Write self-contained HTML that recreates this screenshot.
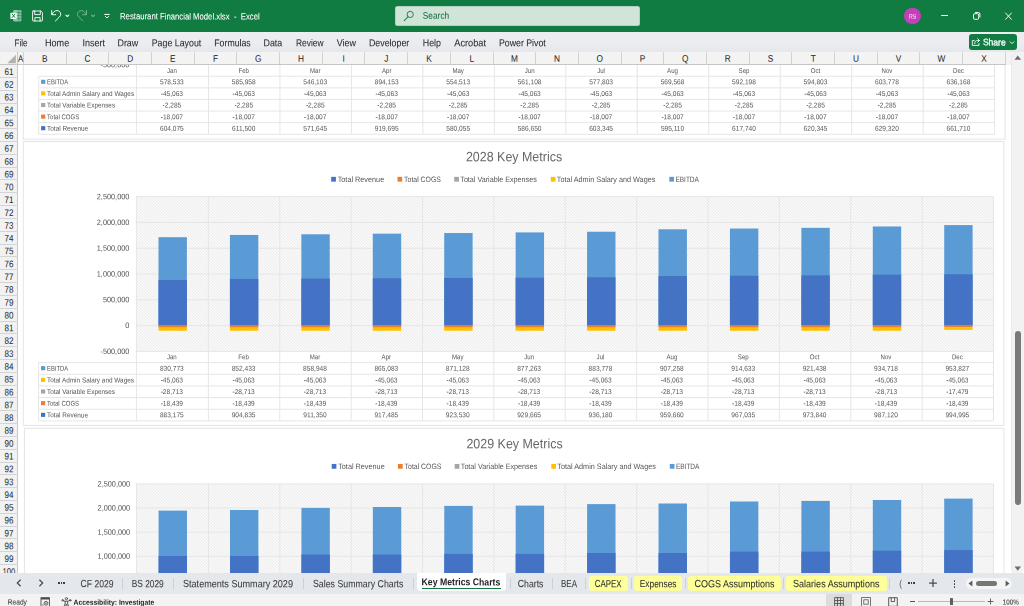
<!DOCTYPE html>
<html lang="en"><head><meta charset="utf-8"><title>Restaurant Financial Model.xlsx - Excel</title>
<style>
html,body{margin:0;padding:0;}
body{width:1024px;height:606px;overflow:hidden;background:#fff;position:relative;font-family:"Liberation Sans",sans-serif;}
#app{position:absolute;left:0;top:0;width:1024px;height:606px;overflow:hidden;background:#fff;}
.t{position:absolute;left:0;top:0;white-space:pre;transform-origin:0 0;display:block;line-height:normal;}
.b{position:absolute;}
.sb{-webkit-text-stroke-width:.3px;opacity:.999;}
.u{-webkit-text-stroke-width:.06px;opacity:.999;}
.h{-webkit-text-stroke-width:.05px;}
.c{filter:grayscale(1);}
svg{position:absolute;overflow:visible;}
</style></head><body><div id="app">
<svg width="1024" height="606" viewBox="0 0 1024 606" style="left:0;top:0"><defs><pattern id="hatch" width="3" height="3" patternUnits="userSpaceOnUse" shape-rendering="crispEdges"><rect width="3" height="3" fill="#F8F8F8"/><rect x="0" y="0" width="1" height="1" fill="#EDEDED"/><rect x="1" y="1" width="1" height="1" fill="#EDEDED"/><rect x="2" y="2" width="1" height="1" fill="#EDEDED"/></pattern></defs><rect x="23.30" y="-150.00" width="981.80" height="289.20" fill="#fff" stroke="#E4E4E4" stroke-width="1"/><rect x="137.0" y="40" width="857.6" height="25" fill="url(#hatch)"/><rect x="38.70" y="75.75" width="955.90" height="1" fill="#E6E6E6"/><rect x="38.70" y="87.35" width="955.90" height="1" fill="#E6E6E6"/><rect x="38.70" y="98.95" width="955.90" height="1" fill="#E6E6E6"/><rect x="38.70" y="110.55" width="955.90" height="1" fill="#E6E6E6"/><rect x="38.70" y="122.15" width="955.90" height="1" fill="#E6E6E6"/><rect x="38.70" y="133.75" width="955.90" height="1" fill="#E6E6E6"/><rect x="38.20" y="76.25" width="1" height="58.00" fill="#E6E6E6"/><rect x="135.90" y="64.65" width="1" height="69.60" fill="#E6E6E6"/><rect x="207.97" y="64.65" width="1" height="69.60" fill="#E6E6E6"/><rect x="279.43" y="64.65" width="1" height="69.60" fill="#E6E6E6"/><rect x="350.90" y="64.65" width="1" height="69.60" fill="#E6E6E6"/><rect x="422.37" y="64.65" width="1" height="69.60" fill="#E6E6E6"/><rect x="493.83" y="64.65" width="1" height="69.60" fill="#E6E6E6"/><rect x="565.30" y="64.65" width="1" height="69.60" fill="#E6E6E6"/><rect x="636.77" y="64.65" width="1" height="69.60" fill="#E6E6E6"/><rect x="708.23" y="64.65" width="1" height="69.60" fill="#E6E6E6"/><rect x="779.70" y="64.65" width="1" height="69.60" fill="#E6E6E6"/><rect x="851.17" y="64.65" width="1" height="69.60" fill="#E6E6E6"/><rect x="922.63" y="64.65" width="1" height="69.60" fill="#E6E6E6"/><rect x="994.10" y="64.65" width="1" height="69.60" fill="#E6E6E6"/><rect x="41.10" y="79.75" width="4.20" height="4.10" fill="#5B9BD5" /><rect x="41.10" y="91.35" width="4.20" height="4.10" fill="#FFC000" /><rect x="41.10" y="102.95" width="4.20" height="4.10" fill="#A5A5A5" /><rect x="41.10" y="114.55" width="4.20" height="4.10" fill="#ED7D31" /><rect x="41.10" y="126.15" width="4.20" height="4.10" fill="#4472C4" /><rect x="23.30" y="141.50" width="980.50" height="283.90" fill="#fff" stroke="#E4E4E4" stroke-width="1"/><rect x="331.20" y="176.85" width="4.70" height="4.80" fill="#4472C4" /><rect x="397.50" y="176.85" width="4.70" height="4.80" fill="#ED7D31" /><rect x="454.20" y="176.85" width="4.70" height="4.80" fill="#A5A5A5" /><rect x="550.80" y="176.85" width="4.70" height="4.80" fill="#FFC000" /><rect x="669.30" y="176.85" width="4.70" height="4.80" fill="#5B9BD5" /><rect x="136.10" y="196.65" width="857.40" height="154.74" fill="url(#hatch)"/><rect x="136.10" y="196.15" width="857.40" height="1" fill="#E6E6E6"/><rect x="136.10" y="221.94" width="857.40" height="1" fill="#E6E6E6"/><rect x="136.10" y="247.73" width="857.40" height="1" fill="#E6E6E6"/><rect x="136.10" y="273.52" width="857.40" height="1" fill="#E6E6E6"/><rect x="136.10" y="299.31" width="857.40" height="1" fill="#E6E6E6"/><rect x="136.10" y="325.10" width="857.40" height="1" fill="#E6E6E6"/><rect x="136.10" y="350.89" width="857.40" height="1" fill="#E6E6E6"/><rect x="135.90" y="196.65" width="1" height="154.74" fill="#E6E6E6"/><rect x="207.88" y="196.65" width="1" height="154.74" fill="#E6E6E6"/><rect x="279.25" y="196.65" width="1" height="154.74" fill="#E6E6E6"/><rect x="350.62" y="196.65" width="1" height="154.74" fill="#E6E6E6"/><rect x="422.00" y="196.65" width="1" height="154.74" fill="#E6E6E6"/><rect x="493.38" y="196.65" width="1" height="154.74" fill="#E6E6E6"/><rect x="564.75" y="196.65" width="1" height="154.74" fill="#E6E6E6"/><rect x="636.12" y="196.65" width="1" height="154.74" fill="#E6E6E6"/><rect x="707.50" y="196.65" width="1" height="154.74" fill="#E6E6E6"/><rect x="778.88" y="196.65" width="1" height="154.74" fill="#E6E6E6"/><rect x="850.25" y="196.65" width="1" height="154.74" fill="#E6E6E6"/><rect x="921.62" y="196.65" width="1" height="154.74" fill="#E6E6E6"/><rect x="993.00" y="196.65" width="1" height="154.74" fill="#E6E6E6"/><rect x="158.49" y="237.19" width="28.40" height="88.41" fill="#5B9BD5" /><rect x="158.49" y="280.05" width="28.40" height="45.55" fill="#4472C4" /><rect x="158.49" y="325.33" width="28.40" height="1.79" fill="#E5813A" /><rect x="158.49" y="327.08" width="28.40" height="0.84" fill="#B0A79A" /><rect x="158.49" y="327.88" width="28.40" height="2.84" fill="#FFC000" /><rect x="229.92" y="234.96" width="28.40" height="90.64" fill="#5B9BD5" /><rect x="229.92" y="278.93" width="28.40" height="46.67" fill="#4472C4" /><rect x="229.92" y="325.33" width="28.40" height="1.79" fill="#E5813A" /><rect x="229.92" y="327.08" width="28.40" height="0.84" fill="#B0A79A" /><rect x="229.92" y="327.88" width="28.40" height="2.84" fill="#FFC000" /><rect x="301.35" y="234.29" width="28.40" height="91.31" fill="#5B9BD5" /><rect x="301.35" y="278.59" width="28.40" height="47.01" fill="#4472C4" /><rect x="301.35" y="325.33" width="28.40" height="1.79" fill="#E5813A" /><rect x="301.35" y="327.08" width="28.40" height="0.84" fill="#B0A79A" /><rect x="301.35" y="327.88" width="28.40" height="2.84" fill="#FFC000" /><rect x="372.78" y="233.66" width="28.40" height="91.94" fill="#5B9BD5" /><rect x="372.78" y="278.28" width="28.40" height="47.32" fill="#4472C4" /><rect x="372.78" y="325.33" width="28.40" height="1.79" fill="#E5813A" /><rect x="372.78" y="327.08" width="28.40" height="0.84" fill="#B0A79A" /><rect x="372.78" y="327.88" width="28.40" height="2.84" fill="#FFC000" /><rect x="444.21" y="233.03" width="28.40" height="92.57" fill="#5B9BD5" /><rect x="444.21" y="277.96" width="28.40" height="47.64" fill="#4472C4" /><rect x="444.21" y="325.33" width="28.40" height="1.79" fill="#E5813A" /><rect x="444.21" y="327.08" width="28.40" height="0.84" fill="#B0A79A" /><rect x="444.21" y="327.88" width="28.40" height="2.84" fill="#FFC000" /><rect x="515.64" y="232.40" width="28.40" height="93.20" fill="#5B9BD5" /><rect x="515.64" y="277.65" width="28.40" height="47.95" fill="#4472C4" /><rect x="515.64" y="325.33" width="28.40" height="1.79" fill="#E5813A" /><rect x="515.64" y="327.08" width="28.40" height="0.84" fill="#B0A79A" /><rect x="515.64" y="327.88" width="28.40" height="2.84" fill="#FFC000" /><rect x="587.07" y="231.73" width="28.40" height="93.87" fill="#5B9BD5" /><rect x="587.07" y="277.31" width="28.40" height="48.29" fill="#4472C4" /><rect x="587.07" y="325.33" width="28.40" height="1.79" fill="#E5813A" /><rect x="587.07" y="327.08" width="28.40" height="0.84" fill="#B0A79A" /><rect x="587.07" y="327.88" width="28.40" height="2.84" fill="#FFC000" /><rect x="658.50" y="229.30" width="28.40" height="96.30" fill="#5B9BD5" /><rect x="658.50" y="276.10" width="28.40" height="49.50" fill="#4472C4" /><rect x="658.50" y="325.33" width="28.40" height="1.79" fill="#E5813A" /><rect x="658.50" y="327.08" width="28.40" height="0.84" fill="#B0A79A" /><rect x="658.50" y="327.88" width="28.40" height="2.84" fill="#FFC000" /><rect x="729.93" y="228.54" width="28.40" height="97.06" fill="#5B9BD5" /><rect x="729.93" y="275.72" width="28.40" height="49.88" fill="#4472C4" /><rect x="729.93" y="325.33" width="28.40" height="1.79" fill="#E5813A" /><rect x="729.93" y="327.08" width="28.40" height="0.84" fill="#B0A79A" /><rect x="729.93" y="327.88" width="28.40" height="2.84" fill="#FFC000" /><rect x="801.36" y="227.84" width="28.40" height="97.76" fill="#5B9BD5" /><rect x="801.36" y="275.37" width="28.40" height="50.23" fill="#4472C4" /><rect x="801.36" y="325.33" width="28.40" height="1.79" fill="#E5813A" /><rect x="801.36" y="327.08" width="28.40" height="0.84" fill="#B0A79A" /><rect x="801.36" y="327.88" width="28.40" height="2.84" fill="#FFC000" /><rect x="872.79" y="226.47" width="28.40" height="99.13" fill="#5B9BD5" /><rect x="872.79" y="274.68" width="28.40" height="50.92" fill="#4472C4" /><rect x="872.79" y="325.33" width="28.40" height="1.79" fill="#E5813A" /><rect x="872.79" y="327.08" width="28.40" height="0.84" fill="#B0A79A" /><rect x="872.79" y="327.88" width="28.40" height="2.84" fill="#FFC000" /><rect x="944.22" y="225.08" width="28.40" height="100.52" fill="#5B9BD5" /><rect x="944.22" y="274.28" width="28.40" height="51.32" fill="#4472C4" /><rect x="944.22" y="325.33" width="28.40" height="1.79" fill="#E5813A" /><rect x="944.22" y="327.08" width="28.40" height="2.79" fill="#FFC000" /><rect x="38.60" y="362.10" width="954.90" height="1" fill="#E6E6E6"/><rect x="38.60" y="373.76" width="954.90" height="1" fill="#E6E6E6"/><rect x="38.60" y="385.42" width="954.90" height="1" fill="#E6E6E6"/><rect x="38.60" y="397.08" width="954.90" height="1" fill="#E6E6E6"/><rect x="38.60" y="408.74" width="954.90" height="1" fill="#E6E6E6"/><rect x="38.60" y="420.40" width="954.90" height="1" fill="#E6E6E6"/><rect x="38.10" y="362.60" width="1" height="58.30" fill="#E6E6E6"/><rect x="135.90" y="350.94" width="1" height="69.96" fill="#E6E6E6"/><rect x="207.88" y="350.94" width="1" height="69.96" fill="#E6E6E6"/><rect x="279.25" y="350.94" width="1" height="69.96" fill="#E6E6E6"/><rect x="350.62" y="350.94" width="1" height="69.96" fill="#E6E6E6"/><rect x="422.00" y="350.94" width="1" height="69.96" fill="#E6E6E6"/><rect x="493.38" y="350.94" width="1" height="69.96" fill="#E6E6E6"/><rect x="564.75" y="350.94" width="1" height="69.96" fill="#E6E6E6"/><rect x="636.12" y="350.94" width="1" height="69.96" fill="#E6E6E6"/><rect x="707.50" y="350.94" width="1" height="69.96" fill="#E6E6E6"/><rect x="778.88" y="350.94" width="1" height="69.96" fill="#E6E6E6"/><rect x="850.25" y="350.94" width="1" height="69.96" fill="#E6E6E6"/><rect x="921.62" y="350.94" width="1" height="69.96" fill="#E6E6E6"/><rect x="993.00" y="350.94" width="1" height="69.96" fill="#E6E6E6"/><rect x="41.00" y="366.13" width="4.20" height="4.10" fill="#5B9BD5" /><rect x="41.00" y="377.79" width="4.20" height="4.10" fill="#FFC000" /><rect x="41.00" y="389.45" width="4.20" height="4.10" fill="#A5A5A5" /><rect x="41.00" y="401.11" width="4.20" height="4.10" fill="#ED7D31" /><rect x="41.00" y="412.77" width="4.20" height="4.10" fill="#4472C4" /><rect x="24.40" y="428.30" width="979.50" height="291.70" fill="#fff" stroke="#E4E4E4" stroke-width="1"/><rect x="331.70" y="463.95" width="4.70" height="4.80" fill="#4472C4" /><rect x="398.00" y="463.95" width="4.70" height="4.80" fill="#ED7D31" /><rect x="454.70" y="463.95" width="4.70" height="4.80" fill="#A5A5A5" /><rect x="551.30" y="463.95" width="4.70" height="4.80" fill="#FFC000" /><rect x="669.80" y="463.95" width="4.70" height="4.80" fill="#5B9BD5" /><rect x="136.20" y="483.90" width="857.30" height="144.78" fill="url(#hatch)"/><rect x="136.20" y="483.40" width="857.30" height="1" fill="#E6E6E6"/><rect x="136.20" y="507.53" width="857.30" height="1" fill="#E6E6E6"/><rect x="136.20" y="531.66" width="857.30" height="1" fill="#E6E6E6"/><rect x="136.20" y="555.79" width="857.30" height="1" fill="#E6E6E6"/><rect x="136.20" y="579.92" width="857.30" height="1" fill="#E6E6E6"/><rect x="136.20" y="604.05" width="857.30" height="1" fill="#E6E6E6"/><rect x="136.20" y="628.18" width="857.30" height="1" fill="#E6E6E6"/><rect x="136.00" y="483.90" width="1" height="144.78" fill="#E6E6E6"/><rect x="207.97" y="483.90" width="1" height="144.78" fill="#E6E6E6"/><rect x="279.33" y="483.90" width="1" height="144.78" fill="#E6E6E6"/><rect x="350.70" y="483.90" width="1" height="144.78" fill="#E6E6E6"/><rect x="422.07" y="483.90" width="1" height="144.78" fill="#E6E6E6"/><rect x="493.43" y="483.90" width="1" height="144.78" fill="#E6E6E6"/><rect x="564.80" y="483.90" width="1" height="144.78" fill="#E6E6E6"/><rect x="636.17" y="483.90" width="1" height="144.78" fill="#E6E6E6"/><rect x="707.53" y="483.90" width="1" height="144.78" fill="#E6E6E6"/><rect x="778.90" y="483.90" width="1" height="144.78" fill="#E6E6E6"/><rect x="850.27" y="483.90" width="1" height="144.78" fill="#E6E6E6"/><rect x="921.63" y="483.90" width="1" height="144.78" fill="#E6E6E6"/><rect x="993.00" y="483.90" width="1" height="144.78" fill="#E6E6E6"/><rect x="158.58" y="510.60" width="28.40" height="109.40" fill="#5B9BD5" /><rect x="158.58" y="556.00" width="28.40" height="64.00" fill="#4472C4" /><rect x="230.00" y="510.00" width="28.40" height="110.00" fill="#5B9BD5" /><rect x="230.00" y="556.00" width="28.40" height="64.00" fill="#4472C4" /><rect x="301.43" y="507.90" width="28.40" height="112.10" fill="#5B9BD5" /><rect x="301.43" y="554.50" width="28.40" height="65.50" fill="#4472C4" /><rect x="372.85" y="507.00" width="28.40" height="113.00" fill="#5B9BD5" /><rect x="372.85" y="554.50" width="28.40" height="65.50" fill="#4472C4" /><rect x="444.27" y="505.90" width="28.40" height="114.10" fill="#5B9BD5" /><rect x="444.27" y="553.90" width="28.40" height="66.10" fill="#4472C4" /><rect x="515.69" y="505.60" width="28.40" height="114.40" fill="#5B9BD5" /><rect x="515.69" y="553.90" width="28.40" height="66.10" fill="#4472C4" /><rect x="587.11" y="504.10" width="28.40" height="115.90" fill="#5B9BD5" /><rect x="587.11" y="553.00" width="28.40" height="67.00" fill="#4472C4" /><rect x="658.53" y="503.50" width="28.40" height="116.50" fill="#5B9BD5" /><rect x="658.53" y="553.00" width="28.40" height="67.00" fill="#4472C4" /><rect x="729.96" y="501.50" width="28.40" height="118.50" fill="#5B9BD5" /><rect x="729.96" y="551.60" width="28.40" height="68.40" fill="#4472C4" /><rect x="801.38" y="500.90" width="28.40" height="119.10" fill="#5B9BD5" /><rect x="801.38" y="551.60" width="28.40" height="68.40" fill="#4472C4" /><rect x="872.80" y="500.00" width="28.40" height="120.00" fill="#5B9BD5" /><rect x="872.80" y="550.70" width="28.40" height="69.30" fill="#4472C4" /><rect x="944.22" y="498.60" width="28.40" height="121.40" fill="#5B9BD5" /><rect x="944.22" y="550.10" width="28.40" height="69.90" fill="#4472C4" /></svg>
<span class="t c" style="font-size:7.0px;color:#555555;transform:translate(166.97px,66.93px) rotate(.05deg) scaleX(0.8700);">Jan</span>
<span class="t c" style="font-size:7.0px;color:#555555;transform:translate(238.50px,66.93px) rotate(.05deg) scaleX(0.8700);">Feb</span>
<span class="t c" style="font-size:7.0px;color:#555555;transform:translate(309.97px,66.93px) rotate(.05deg) scaleX(0.8700);">Mar</span>
<span class="t c" style="font-size:7.0px;color:#555555;transform:translate(381.94px,66.93px) rotate(.05deg) scaleX(0.8700);">Apr</span>
<span class="t c" style="font-size:7.0px;color:#555555;transform:translate(452.40px,66.93px) rotate(.05deg) scaleX(0.8700);">May</span>
<span class="t c" style="font-size:7.0px;color:#555555;transform:translate(524.71px,66.93px) rotate(.05deg) scaleX(0.8700);">Jun</span>
<span class="t c" style="font-size:7.0px;color:#555555;transform:translate(597.19px,66.93px) rotate(.05deg) scaleX(0.8700);">Jul</span>
<span class="t c" style="font-size:7.0px;color:#555555;transform:translate(667.13px,66.93px) rotate(.05deg) scaleX(0.8700);">Aug</span>
<span class="t c" style="font-size:7.0px;color:#555555;transform:translate(738.60px,66.93px) rotate(.05deg) scaleX(0.8700);">Sep</span>
<span class="t c" style="font-size:7.0px;color:#555555;transform:translate(810.75px,66.93px) rotate(.05deg) scaleX(0.8700);">Oct</span>
<span class="t c" style="font-size:7.0px;color:#555555;transform:translate(881.53px,66.93px) rotate(.05deg) scaleX(0.8700);">Nov</span>
<span class="t c" style="font-size:7.0px;color:#555555;transform:translate(953.00px,66.93px) rotate(.05deg) scaleX(0.8700);">Dec</span>
<span class="t c" style="font-size:7.0px;color:#555555;transform:translate(47.10px,78.33px) rotate(.05deg) scaleX(0.8345);">EBITDA</span>
<span class="t c" style="font-size:7.0px;color:#555555;transform:translate(159.99px,78.33px) rotate(.05deg) scaleX(0.9400);">578,533</span>
<span class="t c" style="font-size:7.0px;color:#555555;transform:translate(231.86px,78.33px) rotate(.05deg) scaleX(0.9400);">585,958</span>
<span class="t c" style="font-size:7.0px;color:#555555;transform:translate(303.32px,78.33px) rotate(.05deg) scaleX(0.9400);">546,103</span>
<span class="t c" style="font-size:7.0px;color:#555555;transform:translate(374.79px,78.33px) rotate(.05deg) scaleX(0.9400);">894,153</span>
<span class="t c" style="font-size:7.0px;color:#555555;transform:translate(446.26px,78.33px) rotate(.05deg) scaleX(0.9400);">554,513</span>
<span class="t c" style="font-size:7.0px;color:#555555;transform:translate(517.72px,78.33px) rotate(.05deg) scaleX(0.9400);">561,108</span>
<span class="t c" style="font-size:7.0px;color:#555555;transform:translate(589.19px,78.33px) rotate(.05deg) scaleX(0.9400);">577,803</span>
<span class="t c" style="font-size:7.0px;color:#555555;transform:translate(660.66px,78.33px) rotate(.05deg) scaleX(0.9400);">569,568</span>
<span class="t c" style="font-size:7.0px;color:#555555;transform:translate(732.12px,78.33px) rotate(.05deg) scaleX(0.9400);">592,198</span>
<span class="t c" style="font-size:7.0px;color:#555555;transform:translate(803.59px,78.33px) rotate(.05deg) scaleX(0.9400);">594,803</span>
<span class="t c" style="font-size:7.0px;color:#555555;transform:translate(875.06px,78.33px) rotate(.05deg) scaleX(0.9400);">603,778</span>
<span class="t c" style="font-size:7.0px;color:#555555;transform:translate(946.52px,78.33px) rotate(.05deg) scaleX(0.9400);">636,168</span>
<span class="t c" style="font-size:7.0px;color:#555555;transform:translate(47.10px,89.93px) rotate(.05deg) scaleX(0.9151);">Total Admin Salary and Wages</span>
<span class="t c" style="font-size:7.0px;color:#555555;transform:translate(160.72px,89.93px) rotate(.05deg) scaleX(0.9400);">-45,063</span>
<span class="t c" style="font-size:7.0px;color:#555555;transform:translate(232.59px,89.93px) rotate(.05deg) scaleX(0.9400);">-45,063</span>
<span class="t c" style="font-size:7.0px;color:#555555;transform:translate(304.06px,89.93px) rotate(.05deg) scaleX(0.9400);">-45,063</span>
<span class="t c" style="font-size:7.0px;color:#555555;transform:translate(375.52px,89.93px) rotate(.05deg) scaleX(0.9400);">-45,063</span>
<span class="t c" style="font-size:7.0px;color:#555555;transform:translate(446.99px,89.93px) rotate(.05deg) scaleX(0.9400);">-45,063</span>
<span class="t c" style="font-size:7.0px;color:#555555;transform:translate(518.46px,89.93px) rotate(.05deg) scaleX(0.9400);">-45,063</span>
<span class="t c" style="font-size:7.0px;color:#555555;transform:translate(589.92px,89.93px) rotate(.05deg) scaleX(0.9400);">-45,063</span>
<span class="t c" style="font-size:7.0px;color:#555555;transform:translate(661.39px,89.93px) rotate(.05deg) scaleX(0.9400);">-45,063</span>
<span class="t c" style="font-size:7.0px;color:#555555;transform:translate(732.86px,89.93px) rotate(.05deg) scaleX(0.9400);">-45,063</span>
<span class="t c" style="font-size:7.0px;color:#555555;transform:translate(804.32px,89.93px) rotate(.05deg) scaleX(0.9400);">-45,063</span>
<span class="t c" style="font-size:7.0px;color:#555555;transform:translate(875.79px,89.93px) rotate(.05deg) scaleX(0.9400);">-45,063</span>
<span class="t c" style="font-size:7.0px;color:#555555;transform:translate(947.26px,89.93px) rotate(.05deg) scaleX(0.9400);">-45,063</span>
<span class="t c" style="font-size:7.0px;color:#555555;transform:translate(47.10px,101.53px) rotate(.05deg) scaleX(0.9117);">Total Variable Expenses</span>
<span class="t c" style="font-size:7.0px;color:#555555;transform:translate(162.55px,101.53px) rotate(.05deg) scaleX(0.9400);">-2,285</span>
<span class="t c" style="font-size:7.0px;color:#555555;transform:translate(234.42px,101.53px) rotate(.05deg) scaleX(0.9400);">-2,285</span>
<span class="t c" style="font-size:7.0px;color:#555555;transform:translate(305.89px,101.53px) rotate(.05deg) scaleX(0.9400);">-2,285</span>
<span class="t c" style="font-size:7.0px;color:#555555;transform:translate(377.35px,101.53px) rotate(.05deg) scaleX(0.9400);">-2,285</span>
<span class="t c" style="font-size:7.0px;color:#555555;transform:translate(448.82px,101.53px) rotate(.05deg) scaleX(0.9400);">-2,285</span>
<span class="t c" style="font-size:7.0px;color:#555555;transform:translate(520.29px,101.53px) rotate(.05deg) scaleX(0.9400);">-2,285</span>
<span class="t c" style="font-size:7.0px;color:#555555;transform:translate(591.75px,101.53px) rotate(.05deg) scaleX(0.9400);">-2,285</span>
<span class="t c" style="font-size:7.0px;color:#555555;transform:translate(663.22px,101.53px) rotate(.05deg) scaleX(0.9400);">-2,285</span>
<span class="t c" style="font-size:7.0px;color:#555555;transform:translate(734.69px,101.53px) rotate(.05deg) scaleX(0.9400);">-2,285</span>
<span class="t c" style="font-size:7.0px;color:#555555;transform:translate(806.15px,101.53px) rotate(.05deg) scaleX(0.9400);">-2,285</span>
<span class="t c" style="font-size:7.0px;color:#555555;transform:translate(877.62px,101.53px) rotate(.05deg) scaleX(0.9400);">-2,285</span>
<span class="t c" style="font-size:7.0px;color:#555555;transform:translate(949.09px,101.53px) rotate(.05deg) scaleX(0.9400);">-2,285</span>
<span class="t c" style="font-size:7.0px;color:#555555;transform:translate(47.10px,113.13px) rotate(.05deg) scaleX(0.8596);">Total COGS</span>
<span class="t c" style="font-size:7.0px;color:#555555;transform:translate(160.72px,113.13px) rotate(.05deg) scaleX(0.9400);">-18,007</span>
<span class="t c" style="font-size:7.0px;color:#555555;transform:translate(232.59px,113.13px) rotate(.05deg) scaleX(0.9400);">-18,007</span>
<span class="t c" style="font-size:7.0px;color:#555555;transform:translate(304.06px,113.13px) rotate(.05deg) scaleX(0.9400);">-18,007</span>
<span class="t c" style="font-size:7.0px;color:#555555;transform:translate(375.52px,113.13px) rotate(.05deg) scaleX(0.9400);">-18,007</span>
<span class="t c" style="font-size:7.0px;color:#555555;transform:translate(446.99px,113.13px) rotate(.05deg) scaleX(0.9400);">-18,007</span>
<span class="t c" style="font-size:7.0px;color:#555555;transform:translate(518.46px,113.13px) rotate(.05deg) scaleX(0.9400);">-18,007</span>
<span class="t c" style="font-size:7.0px;color:#555555;transform:translate(589.92px,113.13px) rotate(.05deg) scaleX(0.9400);">-18,007</span>
<span class="t c" style="font-size:7.0px;color:#555555;transform:translate(661.39px,113.13px) rotate(.05deg) scaleX(0.9400);">-18,007</span>
<span class="t c" style="font-size:7.0px;color:#555555;transform:translate(732.86px,113.13px) rotate(.05deg) scaleX(0.9400);">-18,007</span>
<span class="t c" style="font-size:7.0px;color:#555555;transform:translate(804.32px,113.13px) rotate(.05deg) scaleX(0.9400);">-18,007</span>
<span class="t c" style="font-size:7.0px;color:#555555;transform:translate(875.79px,113.13px) rotate(.05deg) scaleX(0.9400);">-18,007</span>
<span class="t c" style="font-size:7.0px;color:#555555;transform:translate(947.26px,113.13px) rotate(.05deg) scaleX(0.9400);">-18,007</span>
<span class="t c" style="font-size:7.0px;color:#555555;transform:translate(47.10px,124.73px) rotate(.05deg) scaleX(0.9162);">Total Revenue</span>
<span class="t c" style="font-size:7.0px;color:#555555;transform:translate(159.99px,124.73px) rotate(.05deg) scaleX(0.9400);">604,075</span>
<span class="t c" style="font-size:7.0px;color:#555555;transform:translate(232.10px,124.73px) rotate(.05deg) scaleX(0.9400);">611,500</span>
<span class="t c" style="font-size:7.0px;color:#555555;transform:translate(303.32px,124.73px) rotate(.05deg) scaleX(0.9400);">571,645</span>
<span class="t c" style="font-size:7.0px;color:#555555;transform:translate(374.79px,124.73px) rotate(.05deg) scaleX(0.9400);">919,695</span>
<span class="t c" style="font-size:7.0px;color:#555555;transform:translate(446.26px,124.73px) rotate(.05deg) scaleX(0.9400);">580,055</span>
<span class="t c" style="font-size:7.0px;color:#555555;transform:translate(517.72px,124.73px) rotate(.05deg) scaleX(0.9400);">586,650</span>
<span class="t c" style="font-size:7.0px;color:#555555;transform:translate(589.19px,124.73px) rotate(.05deg) scaleX(0.9400);">603,345</span>
<span class="t c" style="font-size:7.0px;color:#555555;transform:translate(660.90px,124.73px) rotate(.05deg) scaleX(0.9400);">595,110</span>
<span class="t c" style="font-size:7.0px;color:#555555;transform:translate(732.12px,124.73px) rotate(.05deg) scaleX(0.9400);">617,740</span>
<span class="t c" style="font-size:7.0px;color:#555555;transform:translate(803.59px,124.73px) rotate(.05deg) scaleX(0.9400);">620,345</span>
<span class="t c" style="font-size:7.0px;color:#555555;transform:translate(875.06px,124.73px) rotate(.05deg) scaleX(0.9400);">629,320</span>
<span class="t c" style="font-size:7.0px;color:#555555;transform:translate(946.52px,124.73px) rotate(.05deg) scaleX(0.9400);">661,710</span>
<span class="t c" style="font-size:7.8px;color:#555555;transform:translate(100.45px,60.24px) rotate(.05deg) scaleX(0.9400);">-500,000</span>
<span class="t c" style="font-size:13.6px;color:#686868;transform:translate(465.90px,149.25px) rotate(.05deg) scaleX(0.9165);">2028 Key Metrics</span>
<span class="t c" style="font-size:7.8px;color:#555555;transform:translate(337.70px,174.94px) rotate(.05deg) scaleX(0.9325);">Total Revenue</span>
<span class="t c" style="font-size:7.8px;color:#555555;transform:translate(404.10px,174.94px) rotate(.05deg) scaleX(0.8843);">Total COGS</span>
<span class="t c" style="font-size:7.8px;color:#555555;transform:translate(460.30px,174.94px) rotate(.05deg) scaleX(0.9205);">Total Variable Expenses</span>
<span class="t c" style="font-size:7.8px;color:#555555;transform:translate(556.80px,174.94px) rotate(.05deg) scaleX(0.9308);">Total Admin Salary and Wages</span>
<span class="t c" style="font-size:7.8px;color:#555555;transform:translate(675.40px,174.94px) rotate(.05deg) scaleX(0.8341);">EBITDA</span>
<span class="t c" style="font-size:7.8px;color:#555555;transform:translate(96.78px,192.14px) rotate(.05deg) scaleX(0.9400);">2,500,000</span>
<span class="t c" style="font-size:7.8px;color:#555555;transform:translate(96.78px,217.93px) rotate(.05deg) scaleX(0.9400);">2,000,000</span>
<span class="t c" style="font-size:7.8px;color:#555555;transform:translate(96.78px,243.72px) rotate(.05deg) scaleX(0.9400);">1,500,000</span>
<span class="t c" style="font-size:7.8px;color:#555555;transform:translate(96.78px,269.51px) rotate(.05deg) scaleX(0.9400);">1,000,000</span>
<span class="t c" style="font-size:7.8px;color:#555555;transform:translate(102.90px,295.30px) rotate(.05deg) scaleX(0.9400);">500,000</span>
<span class="t c" style="font-size:7.8px;color:#555555;transform:translate(125.32px,321.09px) rotate(.05deg) scaleX(0.9400);">0</span>
<span class="t c" style="font-size:7.8px;color:#555555;transform:translate(100.45px,346.88px) rotate(.05deg) scaleX(0.9400);">-500,000</span>
<span class="t c" style="font-size:7.0px;color:#555555;transform:translate(166.93px,353.25px) rotate(.05deg) scaleX(0.8700);">Jan</span>
<span class="t c" style="font-size:7.0px;color:#555555;transform:translate(238.37px,353.25px) rotate(.05deg) scaleX(0.8700);">Feb</span>
<span class="t c" style="font-size:7.0px;color:#555555;transform:translate(309.74px,353.25px) rotate(.05deg) scaleX(0.8700);">Mar</span>
<span class="t c" style="font-size:7.0px;color:#555555;transform:translate(381.62px,353.25px) rotate(.05deg) scaleX(0.8700);">Apr</span>
<span class="t c" style="font-size:7.0px;color:#555555;transform:translate(451.98px,353.25px) rotate(.05deg) scaleX(0.8700);">May</span>
<span class="t c" style="font-size:7.0px;color:#555555;transform:translate(524.20px,353.25px) rotate(.05deg) scaleX(0.8700);">Jun</span>
<span class="t c" style="font-size:7.0px;color:#555555;transform:translate(596.59px,353.25px) rotate(.05deg) scaleX(0.8700);">Jul</span>
<span class="t c" style="font-size:7.0px;color:#555555;transform:translate(666.44px,353.25px) rotate(.05deg) scaleX(0.8700);">Aug</span>
<span class="t c" style="font-size:7.0px;color:#555555;transform:translate(737.82px,353.25px) rotate(.05deg) scaleX(0.8700);">Sep</span>
<span class="t c" style="font-size:7.0px;color:#555555;transform:translate(809.88px,353.25px) rotate(.05deg) scaleX(0.8700);">Oct</span>
<span class="t c" style="font-size:7.0px;color:#555555;transform:translate(880.57px,353.25px) rotate(.05deg) scaleX(0.8700);">Nov</span>
<span class="t c" style="font-size:7.0px;color:#555555;transform:translate(951.95px,353.25px) rotate(.05deg) scaleX(0.8700);">Dec</span>
<span class="t c" style="font-size:7.0px;color:#555555;transform:translate(47.00px,364.71px) rotate(.05deg) scaleX(0.8345);">EBITDA</span>
<span class="t c" style="font-size:7.0px;color:#555555;transform:translate(159.94px,364.71px) rotate(.05deg) scaleX(0.9400);">830,773</span>
<span class="t c" style="font-size:7.0px;color:#555555;transform:translate(231.72px,364.71px) rotate(.05deg) scaleX(0.9400);">852,433</span>
<span class="t c" style="font-size:7.0px;color:#555555;transform:translate(303.09px,364.71px) rotate(.05deg) scaleX(0.9400);">858,948</span>
<span class="t c" style="font-size:7.0px;color:#555555;transform:translate(374.47px,364.71px) rotate(.05deg) scaleX(0.9400);">865,083</span>
<span class="t c" style="font-size:7.0px;color:#555555;transform:translate(445.84px,364.71px) rotate(.05deg) scaleX(0.9400);">871,128</span>
<span class="t c" style="font-size:7.0px;color:#555555;transform:translate(517.22px,364.71px) rotate(.05deg) scaleX(0.9400);">877,263</span>
<span class="t c" style="font-size:7.0px;color:#555555;transform:translate(588.59px,364.71px) rotate(.05deg) scaleX(0.9400);">883,778</span>
<span class="t c" style="font-size:7.0px;color:#555555;transform:translate(659.97px,364.71px) rotate(.05deg) scaleX(0.9400);">907,258</span>
<span class="t c" style="font-size:7.0px;color:#555555;transform:translate(731.34px,364.71px) rotate(.05deg) scaleX(0.9400);">914,633</span>
<span class="t c" style="font-size:7.0px;color:#555555;transform:translate(802.72px,364.71px) rotate(.05deg) scaleX(0.9400);">921,438</span>
<span class="t c" style="font-size:7.0px;color:#555555;transform:translate(874.09px,364.71px) rotate(.05deg) scaleX(0.9400);">934,718</span>
<span class="t c" style="font-size:7.0px;color:#555555;transform:translate(945.47px,364.71px) rotate(.05deg) scaleX(0.9400);">953,827</span>
<span class="t c" style="font-size:7.0px;color:#555555;transform:translate(47.00px,376.37px) rotate(.05deg) scaleX(0.9151);">Total Admin Salary and Wages</span>
<span class="t c" style="font-size:7.0px;color:#555555;transform:translate(160.68px,376.37px) rotate(.05deg) scaleX(0.9400);">-45,063</span>
<span class="t c" style="font-size:7.0px;color:#555555;transform:translate(232.45px,376.37px) rotate(.05deg) scaleX(0.9400);">-45,063</span>
<span class="t c" style="font-size:7.0px;color:#555555;transform:translate(303.83px,376.37px) rotate(.05deg) scaleX(0.9400);">-45,063</span>
<span class="t c" style="font-size:7.0px;color:#555555;transform:translate(375.20px,376.37px) rotate(.05deg) scaleX(0.9400);">-45,063</span>
<span class="t c" style="font-size:7.0px;color:#555555;transform:translate(446.58px,376.37px) rotate(.05deg) scaleX(0.9400);">-45,063</span>
<span class="t c" style="font-size:7.0px;color:#555555;transform:translate(517.95px,376.37px) rotate(.05deg) scaleX(0.9400);">-45,063</span>
<span class="t c" style="font-size:7.0px;color:#555555;transform:translate(589.33px,376.37px) rotate(.05deg) scaleX(0.9400);">-45,063</span>
<span class="t c" style="font-size:7.0px;color:#555555;transform:translate(660.70px,376.37px) rotate(.05deg) scaleX(0.9400);">-45,063</span>
<span class="t c" style="font-size:7.0px;color:#555555;transform:translate(732.08px,376.37px) rotate(.05deg) scaleX(0.9400);">-45,063</span>
<span class="t c" style="font-size:7.0px;color:#555555;transform:translate(803.45px,376.37px) rotate(.05deg) scaleX(0.9400);">-45,063</span>
<span class="t c" style="font-size:7.0px;color:#555555;transform:translate(874.83px,376.37px) rotate(.05deg) scaleX(0.9400);">-45,063</span>
<span class="t c" style="font-size:7.0px;color:#555555;transform:translate(946.20px,376.37px) rotate(.05deg) scaleX(0.9400);">-45,063</span>
<span class="t c" style="font-size:7.0px;color:#555555;transform:translate(47.00px,388.03px) rotate(.05deg) scaleX(0.9117);">Total Variable Expenses</span>
<span class="t c" style="font-size:7.0px;color:#555555;transform:translate(160.68px,388.03px) rotate(.05deg) scaleX(0.9400);">-28,713</span>
<span class="t c" style="font-size:7.0px;color:#555555;transform:translate(232.45px,388.03px) rotate(.05deg) scaleX(0.9400);">-28,713</span>
<span class="t c" style="font-size:7.0px;color:#555555;transform:translate(303.83px,388.03px) rotate(.05deg) scaleX(0.9400);">-28,713</span>
<span class="t c" style="font-size:7.0px;color:#555555;transform:translate(375.20px,388.03px) rotate(.05deg) scaleX(0.9400);">-28,713</span>
<span class="t c" style="font-size:7.0px;color:#555555;transform:translate(446.58px,388.03px) rotate(.05deg) scaleX(0.9400);">-28,713</span>
<span class="t c" style="font-size:7.0px;color:#555555;transform:translate(517.95px,388.03px) rotate(.05deg) scaleX(0.9400);">-28,713</span>
<span class="t c" style="font-size:7.0px;color:#555555;transform:translate(589.33px,388.03px) rotate(.05deg) scaleX(0.9400);">-28,713</span>
<span class="t c" style="font-size:7.0px;color:#555555;transform:translate(660.70px,388.03px) rotate(.05deg) scaleX(0.9400);">-28,713</span>
<span class="t c" style="font-size:7.0px;color:#555555;transform:translate(732.08px,388.03px) rotate(.05deg) scaleX(0.9400);">-28,713</span>
<span class="t c" style="font-size:7.0px;color:#555555;transform:translate(803.45px,388.03px) rotate(.05deg) scaleX(0.9400);">-28,713</span>
<span class="t c" style="font-size:7.0px;color:#555555;transform:translate(874.83px,388.03px) rotate(.05deg) scaleX(0.9400);">-28,713</span>
<span class="t c" style="font-size:7.0px;color:#555555;transform:translate(946.20px,388.03px) rotate(.05deg) scaleX(0.9400);">-17,479</span>
<span class="t c" style="font-size:7.0px;color:#555555;transform:translate(47.00px,399.69px) rotate(.05deg) scaleX(0.8596);">Total COGS</span>
<span class="t c" style="font-size:7.0px;color:#555555;transform:translate(160.68px,399.69px) rotate(.05deg) scaleX(0.9400);">-18,439</span>
<span class="t c" style="font-size:7.0px;color:#555555;transform:translate(232.45px,399.69px) rotate(.05deg) scaleX(0.9400);">-18,439</span>
<span class="t c" style="font-size:7.0px;color:#555555;transform:translate(303.83px,399.69px) rotate(.05deg) scaleX(0.9400);">-18,439</span>
<span class="t c" style="font-size:7.0px;color:#555555;transform:translate(375.20px,399.69px) rotate(.05deg) scaleX(0.9400);">-18,439</span>
<span class="t c" style="font-size:7.0px;color:#555555;transform:translate(446.58px,399.69px) rotate(.05deg) scaleX(0.9400);">-18,439</span>
<span class="t c" style="font-size:7.0px;color:#555555;transform:translate(517.95px,399.69px) rotate(.05deg) scaleX(0.9400);">-18,439</span>
<span class="t c" style="font-size:7.0px;color:#555555;transform:translate(589.33px,399.69px) rotate(.05deg) scaleX(0.9400);">-18,439</span>
<span class="t c" style="font-size:7.0px;color:#555555;transform:translate(660.70px,399.69px) rotate(.05deg) scaleX(0.9400);">-18,439</span>
<span class="t c" style="font-size:7.0px;color:#555555;transform:translate(732.08px,399.69px) rotate(.05deg) scaleX(0.9400);">-18,439</span>
<span class="t c" style="font-size:7.0px;color:#555555;transform:translate(803.45px,399.69px) rotate(.05deg) scaleX(0.9400);">-18,439</span>
<span class="t c" style="font-size:7.0px;color:#555555;transform:translate(874.83px,399.69px) rotate(.05deg) scaleX(0.9400);">-18,439</span>
<span class="t c" style="font-size:7.0px;color:#555555;transform:translate(946.20px,399.69px) rotate(.05deg) scaleX(0.9400);">-18,439</span>
<span class="t c" style="font-size:7.0px;color:#555555;transform:translate(47.00px,411.35px) rotate(.05deg) scaleX(0.9162);">Total Revenue</span>
<span class="t c" style="font-size:7.0px;color:#555555;transform:translate(159.94px,411.35px) rotate(.05deg) scaleX(0.9400);">883,175</span>
<span class="t c" style="font-size:7.0px;color:#555555;transform:translate(231.72px,411.35px) rotate(.05deg) scaleX(0.9400);">904,835</span>
<span class="t c" style="font-size:7.0px;color:#555555;transform:translate(303.34px,411.35px) rotate(.05deg) scaleX(0.9400);">911,350</span>
<span class="t c" style="font-size:7.0px;color:#555555;transform:translate(374.47px,411.35px) rotate(.05deg) scaleX(0.9400);">917,485</span>
<span class="t c" style="font-size:7.0px;color:#555555;transform:translate(445.84px,411.35px) rotate(.05deg) scaleX(0.9400);">923,530</span>
<span class="t c" style="font-size:7.0px;color:#555555;transform:translate(517.22px,411.35px) rotate(.05deg) scaleX(0.9400);">929,665</span>
<span class="t c" style="font-size:7.0px;color:#555555;transform:translate(588.59px,411.35px) rotate(.05deg) scaleX(0.9400);">936,180</span>
<span class="t c" style="font-size:7.0px;color:#555555;transform:translate(659.97px,411.35px) rotate(.05deg) scaleX(0.9400);">959,660</span>
<span class="t c" style="font-size:7.0px;color:#555555;transform:translate(731.34px,411.35px) rotate(.05deg) scaleX(0.9400);">967,035</span>
<span class="t c" style="font-size:7.0px;color:#555555;transform:translate(802.72px,411.35px) rotate(.05deg) scaleX(0.9400);">973,840</span>
<span class="t c" style="font-size:7.0px;color:#555555;transform:translate(874.09px,411.35px) rotate(.05deg) scaleX(0.9400);">987,120</span>
<span class="t c" style="font-size:7.0px;color:#555555;transform:translate(945.47px,411.35px) rotate(.05deg) scaleX(0.9400);">994,995</span>
<span class="t c" style="font-size:13.6px;color:#686868;transform:translate(466.40px,436.25px) rotate(.05deg) scaleX(0.9165);">2029 Key Metrics</span>
<span class="t c" style="font-size:7.8px;color:#555555;transform:translate(338.20px,462.04px) rotate(.05deg) scaleX(0.9325);">Total Revenue</span>
<span class="t c" style="font-size:7.8px;color:#555555;transform:translate(404.60px,462.04px) rotate(.05deg) scaleX(0.8843);">Total COGS</span>
<span class="t c" style="font-size:7.8px;color:#555555;transform:translate(460.80px,462.04px) rotate(.05deg) scaleX(0.9205);">Total Variable Expenses</span>
<span class="t c" style="font-size:7.8px;color:#555555;transform:translate(557.30px,462.04px) rotate(.05deg) scaleX(0.9308);">Total Admin Salary and Wages</span>
<span class="t c" style="font-size:7.8px;color:#555555;transform:translate(675.90px,462.04px) rotate(.05deg) scaleX(0.8341);">EBITDA</span>
<span class="t c" style="font-size:7.8px;color:#555555;transform:translate(97.58px,479.39px) rotate(.05deg) scaleX(0.9400);">2,500,000</span>
<span class="t c" style="font-size:7.8px;color:#555555;transform:translate(97.58px,503.52px) rotate(.05deg) scaleX(0.9400);">2,000,000</span>
<span class="t c" style="font-size:7.8px;color:#555555;transform:translate(97.58px,527.65px) rotate(.05deg) scaleX(0.9400);">1,500,000</span>
<span class="t c" style="font-size:7.8px;color:#555555;transform:translate(97.58px,551.78px) rotate(.05deg) scaleX(0.9400);">1,000,000</span>
<span class="t c" style="font-size:7.8px;color:#555555;transform:translate(103.70px,575.91px) rotate(.05deg) scaleX(0.9400);">500,000</span>
<div class="b" style="left:0.00px;top:52.00px;width:1024.00px;height:12.60px;background:#F3F3F3;border-bottom:1px solid #C6C6C6;box-sizing:border-box;"></div>
<div class="b" style="left:0.00px;top:64.50px;width:17.50px;height:510.00px;background:#F2F2F2;border-right:1px solid #C9C9C9;box-sizing:border-box;"></div>
<div class="b" style="left:22.95px;top:52.40px;width:1.00px;height:12.00px;background:#D2D2D2;"></div>
<span class="t h" style="font-size:9.6px;color:#262626;transform:translate(18.05px,52.83px) rotate(.05deg) scaleX(0.8200);">A</span>
<div class="b" style="left:65.64px;top:52.40px;width:1.00px;height:12.00px;background:#D2D2D2;"></div>
<span class="t h" style="font-size:9.6px;color:#262626;transform:translate(42.04px,52.83px) rotate(.05deg) scaleX(0.8600);">B</span>
<div class="b" style="left:108.33px;top:52.40px;width:1.00px;height:12.00px;background:#D2D2D2;"></div>
<span class="t h" style="font-size:9.6px;color:#262626;transform:translate(84.50px,52.83px) rotate(.05deg) scaleX(0.8600);">C</span>
<div class="b" style="left:151.02px;top:52.40px;width:1.00px;height:12.00px;background:#D2D2D2;"></div>
<span class="t h" style="font-size:9.6px;color:#262626;transform:translate(127.19px,52.83px) rotate(.05deg) scaleX(0.8600);">D</span>
<div class="b" style="left:193.71px;top:52.40px;width:1.00px;height:12.00px;background:#D2D2D2;"></div>
<span class="t h" style="font-size:9.6px;color:#262626;transform:translate(170.11px,52.83px) rotate(.05deg) scaleX(0.8600);">E</span>
<div class="b" style="left:236.40px;top:52.40px;width:1.00px;height:12.00px;background:#D2D2D2;"></div>
<span class="t h" style="font-size:9.6px;color:#262626;transform:translate(213.03px,52.83px) rotate(.05deg) scaleX(0.8600);">F</span>
<div class="b" style="left:279.09px;top:52.40px;width:1.00px;height:12.00px;background:#D2D2D2;"></div>
<span class="t h" style="font-size:9.6px;color:#262626;transform:translate(255.03px,52.83px) rotate(.05deg) scaleX(0.8600);">G</span>
<div class="b" style="left:321.78px;top:52.40px;width:1.00px;height:12.00px;background:#D2D2D2;"></div>
<span class="t h" style="font-size:9.6px;color:#262626;transform:translate(297.95px,52.83px) rotate(.05deg) scaleX(0.8600);">H</span>
<div class="b" style="left:364.47px;top:52.40px;width:1.00px;height:12.00px;background:#D2D2D2;"></div>
<span class="t h" style="font-size:9.6px;color:#262626;transform:translate(342.48px,52.83px) rotate(.05deg) scaleX(0.8600);">I</span>
<div class="b" style="left:407.16px;top:52.40px;width:1.00px;height:12.00px;background:#D2D2D2;"></div>
<span class="t h" style="font-size:9.6px;color:#262626;transform:translate(384.25px,52.83px) rotate(.05deg) scaleX(0.8600);">J</span>
<div class="b" style="left:449.85px;top:52.40px;width:1.00px;height:12.00px;background:#D2D2D2;"></div>
<span class="t h" style="font-size:9.6px;color:#262626;transform:translate(426.25px,52.83px) rotate(.05deg) scaleX(0.8600);">K</span>
<div class="b" style="left:492.54px;top:52.40px;width:1.00px;height:12.00px;background:#D2D2D2;"></div>
<span class="t h" style="font-size:9.6px;color:#262626;transform:translate(469.40px,52.83px) rotate(.05deg) scaleX(0.8600);">L</span>
<div class="b" style="left:535.23px;top:52.40px;width:1.00px;height:12.00px;background:#D2D2D2;"></div>
<span class="t h" style="font-size:9.6px;color:#262626;transform:translate(510.95px,52.83px) rotate(.05deg) scaleX(0.8600);">M</span>
<div class="b" style="left:577.92px;top:52.40px;width:1.00px;height:12.00px;background:#D2D2D2;"></div>
<span class="t h" style="font-size:9.6px;color:#262626;transform:translate(554.09px,52.83px) rotate(.05deg) scaleX(0.8600);">N</span>
<div class="b" style="left:620.61px;top:52.40px;width:1.00px;height:12.00px;background:#D2D2D2;"></div>
<span class="t h" style="font-size:9.6px;color:#262626;transform:translate(596.55px,52.83px) rotate(.05deg) scaleX(0.8600);">O</span>
<div class="b" style="left:663.30px;top:52.40px;width:1.00px;height:12.00px;background:#D2D2D2;"></div>
<span class="t h" style="font-size:9.6px;color:#262626;transform:translate(639.70px,52.83px) rotate(.05deg) scaleX(0.8600);">P</span>
<div class="b" style="left:705.99px;top:52.40px;width:1.00px;height:12.00px;background:#D2D2D2;"></div>
<span class="t h" style="font-size:9.6px;color:#262626;transform:translate(681.93px,52.83px) rotate(.05deg) scaleX(0.8600);">Q</span>
<div class="b" style="left:748.68px;top:52.40px;width:1.00px;height:12.00px;background:#D2D2D2;"></div>
<span class="t h" style="font-size:9.6px;color:#262626;transform:translate(724.85px,52.83px) rotate(.05deg) scaleX(0.8600);">R</span>
<div class="b" style="left:791.37px;top:52.40px;width:1.00px;height:12.00px;background:#D2D2D2;"></div>
<span class="t h" style="font-size:9.6px;color:#262626;transform:translate(767.77px,52.83px) rotate(.05deg) scaleX(0.8600);">S</span>
<div class="b" style="left:834.06px;top:52.40px;width:1.00px;height:12.00px;background:#D2D2D2;"></div>
<span class="t h" style="font-size:9.6px;color:#262626;transform:translate(810.69px,52.83px) rotate(.05deg) scaleX(0.8600);">T</span>
<div class="b" style="left:876.75px;top:52.40px;width:1.00px;height:12.00px;background:#D2D2D2;"></div>
<span class="t h" style="font-size:9.6px;color:#262626;transform:translate(852.92px,52.83px) rotate(.05deg) scaleX(0.8600);">U</span>
<div class="b" style="left:919.44px;top:52.40px;width:1.00px;height:12.00px;background:#D2D2D2;"></div>
<span class="t h" style="font-size:9.6px;color:#262626;transform:translate(895.84px,52.83px) rotate(.05deg) scaleX(0.8600);">V</span>
<div class="b" style="left:962.13px;top:52.40px;width:1.00px;height:12.00px;background:#D2D2D2;"></div>
<span class="t h" style="font-size:9.6px;color:#262626;transform:translate(937.39px,52.83px) rotate(.05deg) scaleX(0.8600);">W</span>
<div class="b" style="left:1004.82px;top:52.40px;width:1.00px;height:12.00px;background:#D2D2D2;"></div>
<span class="t h" style="font-size:9.6px;color:#262626;transform:translate(981.22px,52.83px) rotate(.05deg) scaleX(0.8600);">X</span>
<div class="b" style="left:17.00px;top:52.40px;width:1.00px;height:12.00px;background:#C9C9C9;"></div>
<svg width="18" height="13" style="left:0;top:52px"><path d="M7.3 11.2 L15.9 11.2 L15.9 2.7 Z" fill="#B2B2B2"/></svg>
<div class="b" style="left:0.00px;top:76.92px;width:17.50px;height:1.00px;background:#D4D4D4;"></div>
<span class="t h" style="font-size:9.6px;color:#2e2e2e;transform:translate(4.52px,65.89px) rotate(.05deg) scaleX(0.8400);">61</span>
<div class="b" style="left:0.00px;top:89.74px;width:17.50px;height:1.00px;background:#D4D4D4;"></div>
<span class="t h" style="font-size:9.6px;color:#2e2e2e;transform:translate(4.52px,78.71px) rotate(.05deg) scaleX(0.8400);">62</span>
<div class="b" style="left:0.00px;top:102.56px;width:17.50px;height:1.00px;background:#D4D4D4;"></div>
<span class="t h" style="font-size:9.6px;color:#2e2e2e;transform:translate(4.52px,91.53px) rotate(.05deg) scaleX(0.8400);">63</span>
<div class="b" style="left:0.00px;top:115.38px;width:17.50px;height:1.00px;background:#D4D4D4;"></div>
<span class="t h" style="font-size:9.6px;color:#2e2e2e;transform:translate(4.52px,104.35px) rotate(.05deg) scaleX(0.8400);">64</span>
<div class="b" style="left:0.00px;top:128.20px;width:17.50px;height:1.00px;background:#D4D4D4;"></div>
<span class="t h" style="font-size:9.6px;color:#2e2e2e;transform:translate(4.52px,117.17px) rotate(.05deg) scaleX(0.8400);">65</span>
<div class="b" style="left:0.00px;top:141.02px;width:17.50px;height:1.00px;background:#D4D4D4;"></div>
<span class="t h" style="font-size:9.6px;color:#2e2e2e;transform:translate(4.52px,129.99px) rotate(.05deg) scaleX(0.8400);">66</span>
<div class="b" style="left:0.00px;top:153.84px;width:17.50px;height:1.00px;background:#D4D4D4;"></div>
<span class="t h" style="font-size:9.6px;color:#2e2e2e;transform:translate(4.52px,142.81px) rotate(.05deg) scaleX(0.8400);">67</span>
<div class="b" style="left:0.00px;top:166.66px;width:17.50px;height:1.00px;background:#D4D4D4;"></div>
<span class="t h" style="font-size:9.6px;color:#2e2e2e;transform:translate(4.52px,155.63px) rotate(.05deg) scaleX(0.8400);">68</span>
<div class="b" style="left:0.00px;top:179.48px;width:17.50px;height:1.00px;background:#D4D4D4;"></div>
<span class="t h" style="font-size:9.6px;color:#2e2e2e;transform:translate(4.52px,168.45px) rotate(.05deg) scaleX(0.8400);">69</span>
<div class="b" style="left:0.00px;top:192.30px;width:17.50px;height:1.00px;background:#D4D4D4;"></div>
<span class="t h" style="font-size:9.6px;color:#2e2e2e;transform:translate(4.52px,181.27px) rotate(.05deg) scaleX(0.8400);">70</span>
<div class="b" style="left:0.00px;top:205.12px;width:17.50px;height:1.00px;background:#D4D4D4;"></div>
<span class="t h" style="font-size:9.6px;color:#2e2e2e;transform:translate(4.52px,194.09px) rotate(.05deg) scaleX(0.8400);">71</span>
<div class="b" style="left:0.00px;top:217.94px;width:17.50px;height:1.00px;background:#D4D4D4;"></div>
<span class="t h" style="font-size:9.6px;color:#2e2e2e;transform:translate(4.52px,206.91px) rotate(.05deg) scaleX(0.8400);">72</span>
<div class="b" style="left:0.00px;top:230.76px;width:17.50px;height:1.00px;background:#D4D4D4;"></div>
<span class="t h" style="font-size:9.6px;color:#2e2e2e;transform:translate(4.52px,219.73px) rotate(.05deg) scaleX(0.8400);">73</span>
<div class="b" style="left:0.00px;top:243.58px;width:17.50px;height:1.00px;background:#D4D4D4;"></div>
<span class="t h" style="font-size:9.6px;color:#2e2e2e;transform:translate(4.52px,232.55px) rotate(.05deg) scaleX(0.8400);">74</span>
<div class="b" style="left:0.00px;top:256.40px;width:17.50px;height:1.00px;background:#D4D4D4;"></div>
<span class="t h" style="font-size:9.6px;color:#2e2e2e;transform:translate(4.52px,245.37px) rotate(.05deg) scaleX(0.8400);">75</span>
<div class="b" style="left:0.00px;top:269.22px;width:17.50px;height:1.00px;background:#D4D4D4;"></div>
<span class="t h" style="font-size:9.6px;color:#2e2e2e;transform:translate(4.52px,258.19px) rotate(.05deg) scaleX(0.8400);">76</span>
<div class="b" style="left:0.00px;top:282.04px;width:17.50px;height:1.00px;background:#D4D4D4;"></div>
<span class="t h" style="font-size:9.6px;color:#2e2e2e;transform:translate(4.52px,271.01px) rotate(.05deg) scaleX(0.8400);">77</span>
<div class="b" style="left:0.00px;top:294.86px;width:17.50px;height:1.00px;background:#D4D4D4;"></div>
<span class="t h" style="font-size:9.6px;color:#2e2e2e;transform:translate(4.52px,283.83px) rotate(.05deg) scaleX(0.8400);">78</span>
<div class="b" style="left:0.00px;top:307.68px;width:17.50px;height:1.00px;background:#D4D4D4;"></div>
<span class="t h" style="font-size:9.6px;color:#2e2e2e;transform:translate(4.52px,296.65px) rotate(.05deg) scaleX(0.8400);">79</span>
<div class="b" style="left:0.00px;top:320.50px;width:17.50px;height:1.00px;background:#D4D4D4;"></div>
<span class="t h" style="font-size:9.6px;color:#2e2e2e;transform:translate(4.52px,309.47px) rotate(.05deg) scaleX(0.8400);">80</span>
<div class="b" style="left:0.00px;top:333.32px;width:17.50px;height:1.00px;background:#D4D4D4;"></div>
<span class="t h" style="font-size:9.6px;color:#2e2e2e;transform:translate(4.52px,322.29px) rotate(.05deg) scaleX(0.8400);">81</span>
<div class="b" style="left:0.00px;top:346.14px;width:17.50px;height:1.00px;background:#D4D4D4;"></div>
<span class="t h" style="font-size:9.6px;color:#2e2e2e;transform:translate(4.52px,335.11px) rotate(.05deg) scaleX(0.8400);">82</span>
<div class="b" style="left:0.00px;top:358.96px;width:17.50px;height:1.00px;background:#D4D4D4;"></div>
<span class="t h" style="font-size:9.6px;color:#2e2e2e;transform:translate(4.52px,347.93px) rotate(.05deg) scaleX(0.8400);">83</span>
<div class="b" style="left:0.00px;top:371.78px;width:17.50px;height:1.00px;background:#D4D4D4;"></div>
<span class="t h" style="font-size:9.6px;color:#2e2e2e;transform:translate(4.52px,360.75px) rotate(.05deg) scaleX(0.8400);">84</span>
<div class="b" style="left:0.00px;top:384.60px;width:17.50px;height:1.00px;background:#D4D4D4;"></div>
<span class="t h" style="font-size:9.6px;color:#2e2e2e;transform:translate(4.52px,373.57px) rotate(.05deg) scaleX(0.8400);">85</span>
<div class="b" style="left:0.00px;top:397.42px;width:17.50px;height:1.00px;background:#D4D4D4;"></div>
<span class="t h" style="font-size:9.6px;color:#2e2e2e;transform:translate(4.52px,386.39px) rotate(.05deg) scaleX(0.8400);">86</span>
<div class="b" style="left:0.00px;top:410.24px;width:17.50px;height:1.00px;background:#D4D4D4;"></div>
<span class="t h" style="font-size:9.6px;color:#2e2e2e;transform:translate(4.52px,399.21px) rotate(.05deg) scaleX(0.8400);">87</span>
<div class="b" style="left:0.00px;top:423.06px;width:17.50px;height:1.00px;background:#D4D4D4;"></div>
<span class="t h" style="font-size:9.6px;color:#2e2e2e;transform:translate(4.52px,412.03px) rotate(.05deg) scaleX(0.8400);">88</span>
<div class="b" style="left:0.00px;top:435.88px;width:17.50px;height:1.00px;background:#D4D4D4;"></div>
<span class="t h" style="font-size:9.6px;color:#2e2e2e;transform:translate(4.52px,424.85px) rotate(.05deg) scaleX(0.8400);">89</span>
<div class="b" style="left:0.00px;top:448.70px;width:17.50px;height:1.00px;background:#D4D4D4;"></div>
<span class="t h" style="font-size:9.6px;color:#2e2e2e;transform:translate(4.52px,437.67px) rotate(.05deg) scaleX(0.8400);">90</span>
<div class="b" style="left:0.00px;top:461.52px;width:17.50px;height:1.00px;background:#D4D4D4;"></div>
<span class="t h" style="font-size:9.6px;color:#2e2e2e;transform:translate(4.52px,450.49px) rotate(.05deg) scaleX(0.8400);">91</span>
<div class="b" style="left:0.00px;top:474.34px;width:17.50px;height:1.00px;background:#D4D4D4;"></div>
<span class="t h" style="font-size:9.6px;color:#2e2e2e;transform:translate(4.52px,463.31px) rotate(.05deg) scaleX(0.8400);">92</span>
<div class="b" style="left:0.00px;top:487.16px;width:17.50px;height:1.00px;background:#D4D4D4;"></div>
<span class="t h" style="font-size:9.6px;color:#2e2e2e;transform:translate(4.52px,476.13px) rotate(.05deg) scaleX(0.8400);">93</span>
<div class="b" style="left:0.00px;top:499.98px;width:17.50px;height:1.00px;background:#D4D4D4;"></div>
<span class="t h" style="font-size:9.6px;color:#2e2e2e;transform:translate(4.52px,488.95px) rotate(.05deg) scaleX(0.8400);">94</span>
<div class="b" style="left:0.00px;top:512.80px;width:17.50px;height:1.00px;background:#D4D4D4;"></div>
<span class="t h" style="font-size:9.6px;color:#2e2e2e;transform:translate(4.52px,501.77px) rotate(.05deg) scaleX(0.8400);">95</span>
<div class="b" style="left:0.00px;top:525.62px;width:17.50px;height:1.00px;background:#D4D4D4;"></div>
<span class="t h" style="font-size:9.6px;color:#2e2e2e;transform:translate(4.52px,514.59px) rotate(.05deg) scaleX(0.8400);">96</span>
<div class="b" style="left:0.00px;top:538.44px;width:17.50px;height:1.00px;background:#D4D4D4;"></div>
<span class="t h" style="font-size:9.6px;color:#2e2e2e;transform:translate(4.52px,527.41px) rotate(.05deg) scaleX(0.8400);">97</span>
<div class="b" style="left:0.00px;top:551.26px;width:17.50px;height:1.00px;background:#D4D4D4;"></div>
<span class="t h" style="font-size:9.6px;color:#2e2e2e;transform:translate(4.52px,540.23px) rotate(.05deg) scaleX(0.8400);">98</span>
<div class="b" style="left:0.00px;top:564.08px;width:17.50px;height:1.00px;background:#D4D4D4;"></div>
<span class="t h" style="font-size:9.6px;color:#2e2e2e;transform:translate(4.52px,553.05px) rotate(.05deg) scaleX(0.8400);">99</span>
<div class="b" style="left:0.00px;top:576.90px;width:17.50px;height:1.00px;background:#D4D4D4;"></div>
<span class="t h" style="font-size:9.6px;color:#2e2e2e;transform:translate(2.59px,565.87px) rotate(.05deg) scaleX(0.8000);">100</span>
<div class="b" style="left:1011.30px;top:52.60px;width:12.70px;height:521.40px;background:#F2F2F2;border-radius:6px;box-shadow:inset .6px 0 0 #E6E6E6;"></div>
<div class="b" style="left:1005.60px;top:52.00px;width:5.60px;height:12.60px;background:#F3F3F3;"></div>
<div class="b" style="left:1015.20px;top:331.00px;width:5.60px;height:174.00px;background:#7A7A7A;border-radius:3px;"></div>
<svg width="8" height="6" style="left:1014.2px;top:55.2px"><path d="M0.5 4.7 L3.8 0.6 L7.1 4.7 Z" fill="#6e6e6e"/></svg>
<svg width="8" height="6" style="left:1014.2px;top:566.4px"><path d="M0.5 0.6 L3.8 4.7 L7.1 0.6 Z" fill="#6e6e6e"/></svg>
<div class="b" style="left:0.00px;top:0.00px;width:1024.00px;height:32.00px;background:#107C41;"></div>
<svg width="130" height="32" viewBox="0 0 130 32" style="left:0;top:0">
<g fill="none" stroke="#fff" stroke-width="1" stroke-linecap="round" stroke-linejoin="round">
<!-- excel logo -->
<rect x="13.1" y="10.1" width="8.3" height="11.3" rx="1.1" fill="#fff" fill-opacity=".55" stroke="none"/>
<path d="M16.8 12.7H21.4M16.8 15.6H21.4M16.8 18.6H21.4M18.9 10.1V21.4" stroke="#107C41" stroke-width=".7" opacity=".75"/>
<rect x="10.4" y="12.7" width="6.3" height="6.2" rx=".7" fill="#fff" stroke="none"/>
<path d="M12.2 14.1L14.9 17.5M14.9 14.1L12.2 17.5" stroke="#107C41" stroke-width="1"/>
<!-- save -->
<path d="M33.2 11H40.9L42.4 12.5V20.4Q42.4 21 41.8 21H33.2Q32.6 21 32.6 20.4V11.6Q32.6 11 33.2 11Z" stroke-width=".9"/>
<path d="M34.7 11V14.6H40.3V11M34.9 21V17.6H40.1V21" stroke-width=".9" stroke-linejoin="miter"/>
<!-- undo -->
<path d="M51.7 10.5V14.7H55.7" stroke-width=".95"/>
<path d="M52 14.4C53 12.2 54.8 10.6 57 10.6C59.2 10.6 60.7 12.2 60.7 14.2C60.7 15.4 60.2 16.2 59.4 17L55.4 21" stroke-width=".95"/>
<path d="M65.9 15.1L67.35 16.5L68.8 15.1" stroke-width="1.05"/>
<!-- redo -->
<g opacity=".42">
<path d="M86.5 10.5V14.7H82.5" stroke-width=".95"/>
<path d="M86.2 14.4C85.2 12.2 83.4 10.6 81.2 10.6C79 10.6 77.5 12.2 77.5 14.2C77.5 15.4 78 16.2 78.8 17L82.8 21" stroke-width=".95"/>
<path d="M91.6 15.1L93.05 16.5L94.5 15.1" stroke-width="1.05"/>
</g>
<!-- customise -->
<path d="M104.7 14.4H109.3M105.4 16.4L107 18L108.6 16.4" stroke-width="1"/>
</g></svg>
<span class="t u" style="font-size:9.1px;color:#fff;transform:translate(120.00px,11.34px) rotate(.05deg) scaleX(0.8505);">Restaurant Financial Model.xlsx  -  Excel</span>
<div class="b" style="left:395.10px;top:5.50px;width:244.80px;height:20.80px;background:#D0E4D8;border-radius:2.5px;box-shadow:inset 0 0 0 .5px rgba(60,120,85,.35);"></div>
<svg width="12" height="12" viewBox="0 0 12 12" style="left:402px;top:10px"><circle cx="8.2" cy="4.45" r="3.1" fill="none" stroke="#2F7D54" stroke-width="1"/><path d="M5.9 6.8L2.2 10.6" stroke="#2F7D54" stroke-width="1.05" stroke-linecap="round" fill="none"/></svg>
<span class="t u" style="font-size:9.5px;color:#1E6E45;transform:translate(422.80px,9.82px) rotate(.05deg) scaleX(0.8770);">Search</span>
<div class="b" style="left:904.40px;top:7.90px;width:16.20px;height:16.20px;background:#C63FBA;border-radius:50%;"></div>
<span class="t c" style="font-size:6.6px;color:#fff;transform:translate(909.00px,12.64px) rotate(.05deg) scaleX(0.7853);">RS</span>
<svg width="90" height="32" viewBox="934 0 90 32" style="left:934px;top:0">
<g fill="none" stroke="#fff" stroke-width=".95">
<path d="M941.2 15.5H948"/>
<rect x="973.5" y="13.7" width="5.2" height="5.6" rx="1.3"/>
<path d="M975.1 12.5H978.4Q979.9 12.5 979.9 14V17.4"/>
<path d="M1005.3 12.7L1011.7 19.6M1011.7 12.7L1005.3 19.6"/>
</g></svg>
<div class="b" style="left:0.00px;top:32.00px;width:1024.00px;height:20.00px;background:linear-gradient(#ECEEF2,#EAECF0 60%,#E5E7EB);"></div>
<span class="t u" style="font-size:10.0px;color:#2a2a2a;transform:translate(14.50px,37.29px) rotate(.05deg) scaleX(0.8067);">File</span>
<span class="t u" style="font-size:10.0px;color:#2a2a2a;transform:translate(45.00px,37.29px) rotate(.05deg) scaleX(0.9091);">Home</span>
<span class="t u" style="font-size:10.0px;color:#2a2a2a;transform:translate(82.50px,37.29px) rotate(.05deg) scaleX(0.8996);">Insert</span>
<span class="t u" style="font-size:10.0px;color:#2a2a2a;transform:translate(117.50px,37.29px) rotate(.05deg) scaleX(0.8892);">Draw</span>
<span class="t u" style="font-size:10.0px;color:#2a2a2a;transform:translate(151.75px,37.29px) rotate(.05deg) scaleX(0.8814);">Page Layout</span>
<span class="t u" style="font-size:10.0px;color:#2a2a2a;transform:translate(214.25px,37.29px) rotate(.05deg) scaleX(0.8758);">Formulas</span>
<span class="t u" style="font-size:10.0px;color:#2a2a2a;transform:translate(263.50px,37.29px) rotate(.05deg) scaleX(0.8876);">Data</span>
<span class="t u" style="font-size:10.0px;color:#2a2a2a;transform:translate(296.00px,37.29px) rotate(.05deg) scaleX(0.8387);">Review</span>
<span class="t u" style="font-size:10.0px;color:#2a2a2a;transform:translate(336.75px,37.29px) rotate(.05deg) scaleX(0.8955);">View</span>
<span class="t u" style="font-size:10.0px;color:#2a2a2a;transform:translate(369.00px,37.29px) rotate(.05deg) scaleX(0.8830);">Developer</span>
<span class="t u" style="font-size:10.0px;color:#2a2a2a;transform:translate(422.75px,37.29px) rotate(.05deg) scaleX(0.8873);">Help</span>
<span class="t u" style="font-size:10.0px;color:#2a2a2a;transform:translate(454.25px,37.29px) rotate(.05deg) scaleX(0.9212);">Acrobat</span>
<span class="t u" style="font-size:10.0px;color:#2a2a2a;transform:translate(499.00px,37.29px) rotate(.05deg) scaleX(0.8762);">Power Pivot</span>
<div class="b" style="left:969.10px;top:34.10px;width:47.50px;height:15.90px;background:#107C41;border-radius:3px;"></div>
<svg width="12" height="10" viewBox="971 37 12 10" style="left:971px;top:37px"><g fill="none" stroke="#fff" stroke-width=".9" stroke-linejoin="round" stroke-linecap="round"><path d="M974.3 40.6H972.3V45.4H979V43.6"/><path d="M974.6 43.6C974.8 41.6 976 40.5 977.6 40.5H979.4M977.7 38.8L979.5 40.5L977.7 42.3"/></g></svg>
<span class="t sb" style="font-size:9.4px;color:#fff;transform:translate(982.90px,36.37px) rotate(.05deg) scaleX(0.9089);">Share</span>
<svg width="6" height="4" viewBox="0 0 6 4" style="left:1009px;top:40.6px"><path d="M1.2 0.8L3 2.6L4.8 0.8" fill="none" stroke="#fff" stroke-width=".95" stroke-linecap="round"/></svg>
<div class="b" style="left:0.00px;top:572.90px;width:1024.00px;height:21.30px;background:#E4E7EC;"></div>
<div class="b" style="left:0.00px;top:593.60px;width:1024.00px;height:0.80px;background:#D2D4D8;"></div>
<svg width="6" height="8" viewBox="0 0 6 8" style="left:16.4px;top:579px"><path d="M4.6 0.8L1.3 4L4.6 7.2" fill="none" stroke="#4a4a4a" stroke-width="1.2"/></svg>
<svg width="6" height="8" viewBox="0 0 6 8" style="left:38px;top:579px"><path d="M1.4 0.8L4.7 4L1.4 7.2" fill="none" stroke="#4a4a4a" stroke-width="1.2"/></svg>
<div class="b" style="left:57.80px;top:581.60px;width:1.75px;height:2.00px;background:#3c3c3c;"></div>
<div class="b" style="left:60.55px;top:581.60px;width:1.75px;height:2.00px;background:#3c3c3c;"></div>
<div class="b" style="left:63.30px;top:581.60px;width:1.75px;height:2.00px;background:#3c3c3c;"></div>
<span class="t u" style="font-size:10.3px;color:#3a3a3a;transform:translate(80.60px,578.12px) rotate(.05deg) scaleX(0.8328);">CF 2029</span>
<span class="t u" style="font-size:10.3px;color:#3a3a3a;transform:translate(131.75px,578.12px) rotate(.05deg) scaleX(0.8098);">BS 2029</span>
<span class="t u" style="font-size:10.3px;color:#3a3a3a;transform:translate(183.00px,578.12px) rotate(.05deg) scaleX(0.8814);">Statements Summary 2029</span>
<span class="t u" style="font-size:10.3px;color:#3a3a3a;transform:translate(313.00px,578.12px) rotate(.05deg) scaleX(0.8546);">Sales Summary Charts</span>
<span class="t u" style="font-size:10.3px;color:#3a3a3a;transform:translate(517.75px,578.12px) rotate(.05deg) scaleX(0.8488);">Charts</span>
<span class="t u" style="font-size:10.3px;color:#3a3a3a;transform:translate(561.00px,578.12px) rotate(.05deg) scaleX(0.7763);">BEA</span>
<div class="b" style="left:122.10px;top:578.00px;width:0.80px;height:11.00px;background:#CDD0D6;"></div>
<div class="b" style="left:173.10px;top:578.00px;width:0.80px;height:11.00px;background:#CDD0D6;"></div>
<div class="b" style="left:303.35px;top:578.00px;width:0.80px;height:11.00px;background:#CDD0D6;"></div>
<div class="b" style="left:413.30px;top:578.00px;width:0.80px;height:11.00px;background:#CDD0D6;"></div>
<div class="b" style="left:510.20px;top:578.00px;width:0.80px;height:11.00px;background:#CDD0D6;"></div>
<div class="b" style="left:552.35px;top:578.00px;width:0.80px;height:11.00px;background:#CDD0D6;"></div>
<div class="b" style="left:584.80px;top:578.00px;width:0.80px;height:11.00px;background:#CDD0D6;"></div>
<div class="b" style="left:630.60px;top:578.00px;width:0.80px;height:11.00px;background:#CDD0D6;"></div>
<div class="b" style="left:684.60px;top:578.00px;width:0.80px;height:11.00px;background:#CDD0D6;"></div>
<div class="b" style="left:783.20px;top:578.00px;width:0.80px;height:11.00px;background:#CDD0D6;"></div>
<div class="b" style="left:889.10px;top:578.00px;width:0.80px;height:11.00px;background:#CDD0D6;"></div>
<div class="b" style="left:416.50px;top:572.90px;width:89.30px;height:18.20px;background:#fff;border-radius:0 0 4px 4px;"></div>
<span class="t c" style="font-size:10.0px;color:#222;transform:translate(421.60px,576.33px) rotate(.05deg) scaleX(0.8687);font-weight:700;">Key Metrics Charts</span>
<div class="b" style="left:421.50px;top:588.20px;width:79.00px;height:1.10px;background:#107C41;"></div>
<div class="b" style="left:589.00px;top:575.80px;width:38.75px;height:15.40px;background:#FFFF99;border-radius:3px;"></div>
<span class="t u" style="font-size:10.3px;color:#2e2e2e;transform:translate(594.75px,578.12px) rotate(.05deg) scaleX(0.7660);">CAPEX</span>
<div class="b" style="left:633.60px;top:575.80px;width:48.70px;height:15.40px;background:#FFFF99;border-radius:3px;"></div>
<span class="t u" style="font-size:10.3px;color:#2e2e2e;transform:translate(639.70px,578.12px) rotate(.05deg) scaleX(0.8135);">Expenses</span>
<div class="b" style="left:688.25px;top:575.80px;width:92.25px;height:15.40px;background:#FFFF99;border-radius:3px;"></div>
<span class="t u" style="font-size:10.3px;color:#2e2e2e;transform:translate(694.50px,578.12px) rotate(.05deg) scaleX(0.8735);">COGS Assumptions</span>
<div class="b" style="left:786.25px;top:575.80px;width:100.50px;height:15.40px;background:#FFFF99;border-radius:3px;"></div>
<span class="t u" style="font-size:10.3px;color:#2e2e2e;transform:translate(793.00px,578.12px) rotate(.05deg) scaleX(0.8784);">Salaries Assumptions</span>
<span class="t c" style="font-size:9.6px;color:#555;transform:translate(899.30px,577.73px) rotate(.05deg) scaleX(0.8445);">(</span>
<div class="b" style="left:907.90px;top:581.60px;width:1.75px;height:2.00px;background:#3c3c3c;"></div>
<div class="b" style="left:910.65px;top:581.60px;width:1.75px;height:2.00px;background:#3c3c3c;"></div>
<div class="b" style="left:913.40px;top:581.60px;width:1.75px;height:2.00px;background:#3c3c3c;"></div>
<svg width="10" height="10" viewBox="0 0 10 10" style="left:928px;top:578.3px"><path d="M5 1.1V8.9M1.1 5H8.9" stroke="#4a4a4a" stroke-width="1.25" fill="none"/></svg>
<div class="b" style="left:953.70px;top:579.90px;width:1.70px;height:1.70px;background:#3c3c3c;border-radius:50%;"></div>
<div class="b" style="left:953.70px;top:582.90px;width:1.70px;height:1.70px;background:#3c3c3c;border-radius:50%;"></div>
<div class="b" style="left:953.70px;top:585.90px;width:1.70px;height:1.70px;background:#3c3c3c;border-radius:50%;"></div>
<div class="b" style="left:965.50px;top:577.80px;width:46.20px;height:11.00px;background:#F4F5F7;border-radius:5.5px;"></div>
<svg width="5" height="7" viewBox="0 0 5 7" style="left:968.4px;top:580.1px"><path d="M4.4 0.5L0.5 3.5L4.4 6.5Z" fill="#5c5c5c"/></svg>
<svg width="5" height="7" viewBox="0 0 5 7" style="left:1004.6px;top:580.1px"><path d="M0.6 0.5L4.5 3.5L0.6 6.5Z" fill="#5c5c5c"/></svg>
<div class="b" style="left:976.40px;top:580.70px;width:20.40px;height:5.60px;background:#767676;border-radius:2.8px;"></div>
<div class="b" style="left:0.00px;top:594.20px;width:1024.00px;height:11.80px;background:#F3F3F3;"></div>
<span class="t u" style="font-size:7.4px;color:#333;transform:translate(7.80px,597.58px) rotate(.05deg) scaleX(0.8929);">Ready</span>
<svg width="11" height="10" viewBox="0 0 11 10" style="left:39.6px;top:597.2px"><rect x="1" y="0.7" width="8.4" height="8.8" fill="none" stroke="#4a4a4a" stroke-width=".9"/><rect x="1" y="0.7" width="8.4" height="1.8" fill="#4a4a4a"/><circle cx="6.0" cy="6.3" r="1.9" fill="none" stroke="#4a4a4a" stroke-width=".85"/><circle cx="6.0" cy="6.3" r=".7" fill="#333"/><path d="M2.2 7.9H3.6" stroke="#4a4a4a" stroke-width=".8"/></svg>
<svg width="11" height="11" viewBox="0 0 11 11" style="left:60.8px;top:596.6px"><g fill="none" stroke="#3c3c3c" stroke-width=".8" stroke-linecap="round"><circle cx="5.4" cy="1.7" r="1.15"/><circle cx="1.6" cy="3.3" r=".8"/><circle cx="9.2" cy="3.3" r=".8"/><path d="M2.4 3.6L4.2 4.3V6.6L2.6 10.4M8.4 3.6L6.6 4.3V6.6L8.2 10.4M4.2 4.3H6.6M4.4 6.8L7.6 10.2M6.4 6.8L3.2 10.2"/></g></svg>
<span class="t c" style="font-size:7.3px;color:#222;transform:translate(73.50px,597.66px) rotate(.05deg) scaleX(0.9263);font-weight:700;">Accessibility: Investigate</span>
<div class="b" style="left:826.20px;top:594.20px;width:25.60px;height:11.80px;background:#DCDCDC;"></div>
<svg width="10" height="10" viewBox="0 0 10 10" style="left:834.4px;top:597px"><path d="M0.6 0.6H9.4V9.4H0.6Z M0.6 3.5H9.4M0.6 6.5H9.4M3.5 0.6V9.4M6.5 0.6V9.4" fill="none" stroke="#444" stroke-width=".8"/></svg>
<svg width="10" height="10" viewBox="0 0 10 10" style="left:861px;top:597px"><rect x="0.6" y="0.6" width="8.8" height="8.8" fill="none" stroke="#555" stroke-width=".8"/><rect x="2.8" y="2.8" width="4.4" height="4.4" fill="none" stroke="#555" stroke-width=".8"/></svg>
<svg width="10" height="10" viewBox="0 0 10 10" style="left:888px;top:596.8px"><path d="M0.7 0.7H9.3V9.3H0.7Z M3.2 0.7V4.6H6.6V0.7" fill="none" stroke="#4a4a4a" stroke-width=".9"/></svg>
<div class="b" style="left:910.20px;top:601.20px;width:4.60px;height:0.90px;background:#555;"></div>
<div class="b" style="left:918.40px;top:601.20px;width:66.40px;height:0.90px;background:#B9B9B9;"></div>
<div class="b" style="left:950.40px;top:597.80px;width:2.70px;height:7.60px;background:#5e5e5e;border-radius:.6px;"></div>
<svg width="7" height="7" viewBox="0 0 7 7" style="left:987.4px;top:598.2px"><path d="M3.5 0.6V6.4M0.6 3.5H6.4" stroke="#555" stroke-width=".9" fill="none"/></svg>
<span class="t u" style="font-size:7.2px;color:#333;transform:translate(1002.80px,597.54px) rotate(.05deg) scaleX(0.8634);">100%</span>
</div></body></html>
